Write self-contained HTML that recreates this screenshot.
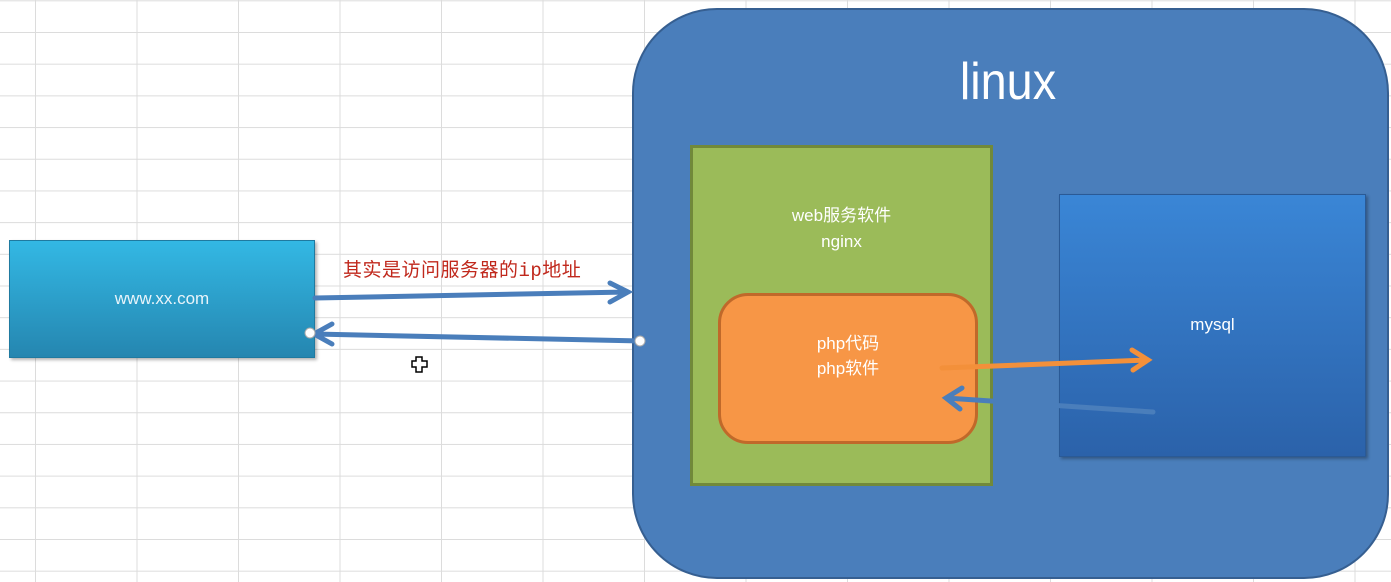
<!DOCTYPE html>
<html><head><meta charset="utf-8"><style>
body{margin:0;width:1391px;height:582px;overflow:hidden;background:#fff;font-family:"Liberation Sans","Noto Sans CJK SC",sans-serif;position:relative}
.grid{position:absolute;inset:0;background-image:linear-gradient(to right,#dcdcdc 1px,transparent 1px),linear-gradient(to bottom,#dcdcdc 1px,transparent 1px);background-size:101.5px 31.7px;background-position:35px 0,0 32px}
.abs{position:absolute;box-sizing:border-box}
.t{color:#fff;text-align:center;position:absolute}
</style></head><body>
<div class="grid"></div>
<div class="abs" style="left:9px;top:240px;width:306px;height:118px;background:linear-gradient(#33b8e4,#2586b0);border:1px solid #1f7aa0;box-shadow:2px 2px 3px rgba(0,0,0,.3)"></div>
<div class="t" style="left:9px;width:306px;top:289px;font-size:17px;color:#e8f4fa">www.xx.com</div>
<div class="abs" style="left:632px;top:8px;width:757px;height:571px;border-radius:85px;background:#4a7ebb;border:2px solid #365f91"></div>
<div class="t" style="left:900px;width:216px;top:52px;font-size:52px;transform:scaleX(0.9)">linux</div>
<div class="abs" style="left:690px;top:145px;width:303px;height:341px;background:#9bbb59;border:3px solid #71893a"></div>
<div class="t" style="left:690px;width:303px;top:203px;font-size:17px;line-height:26px">web服务软件<br>nginx</div>
<div class="abs" style="left:718px;top:293px;width:260px;height:151px;border-radius:30px;background:#f79646;border:3px solid #c0692a"></div>
<div class="t" style="left:718px;width:260px;top:331px;font-size:17px;line-height:25px">php代码<br>php软件</div>
<div class="abs" style="left:1059px;top:194px;width:307px;height:263px;background:linear-gradient(#3a86d6,#2b62aa);border:1px solid #2a5a96;box-shadow:2px 2px 3px rgba(0,0,0,.3)"></div>
<div class="t" style="left:1059px;width:307px;top:315px;font-size:17px">mysql</div>
<div class="abs" style="left:343px;top:255px;font-size:19px;color:#c0281c;font-family:'Liberation Mono','Noto Sans CJK SC',monospace;letter-spacing:0.5px">其实是访问服务器的ip地址</div>
<svg class="abs" style="left:0;top:0" width="1391" height="582">
<g stroke="#4a7ebb" stroke-width="5" fill="none" stroke-linecap="round">
<path d="M315 298 L628 292 M610 283 L628 292 L610 302"/>
<path d="M640 341 L314 334 M332 324 L314 334 L332 344"/>
<path d="M1153 412 L946 398 M962 388 L946 398 L960 409"/>
</g>
<g stroke="#f3903a" stroke-width="5" fill="none" stroke-linecap="round">
<path d="M942 368 L1148 360 M1132 350 L1148 360 L1133 370"/>
</g>
<circle cx="310" cy="333" r="5" fill="#fff" stroke="#aaa"/>
<circle cx="640" cy="341" r="5" fill="#fff" stroke="#aaa"/>
<path d="M416 357h6v4h5v6h-5v5h-6v-5h-4v-6h4z" fill="#fff" stroke="#000" stroke-width="1.5"/>
</svg>
</body></html>
